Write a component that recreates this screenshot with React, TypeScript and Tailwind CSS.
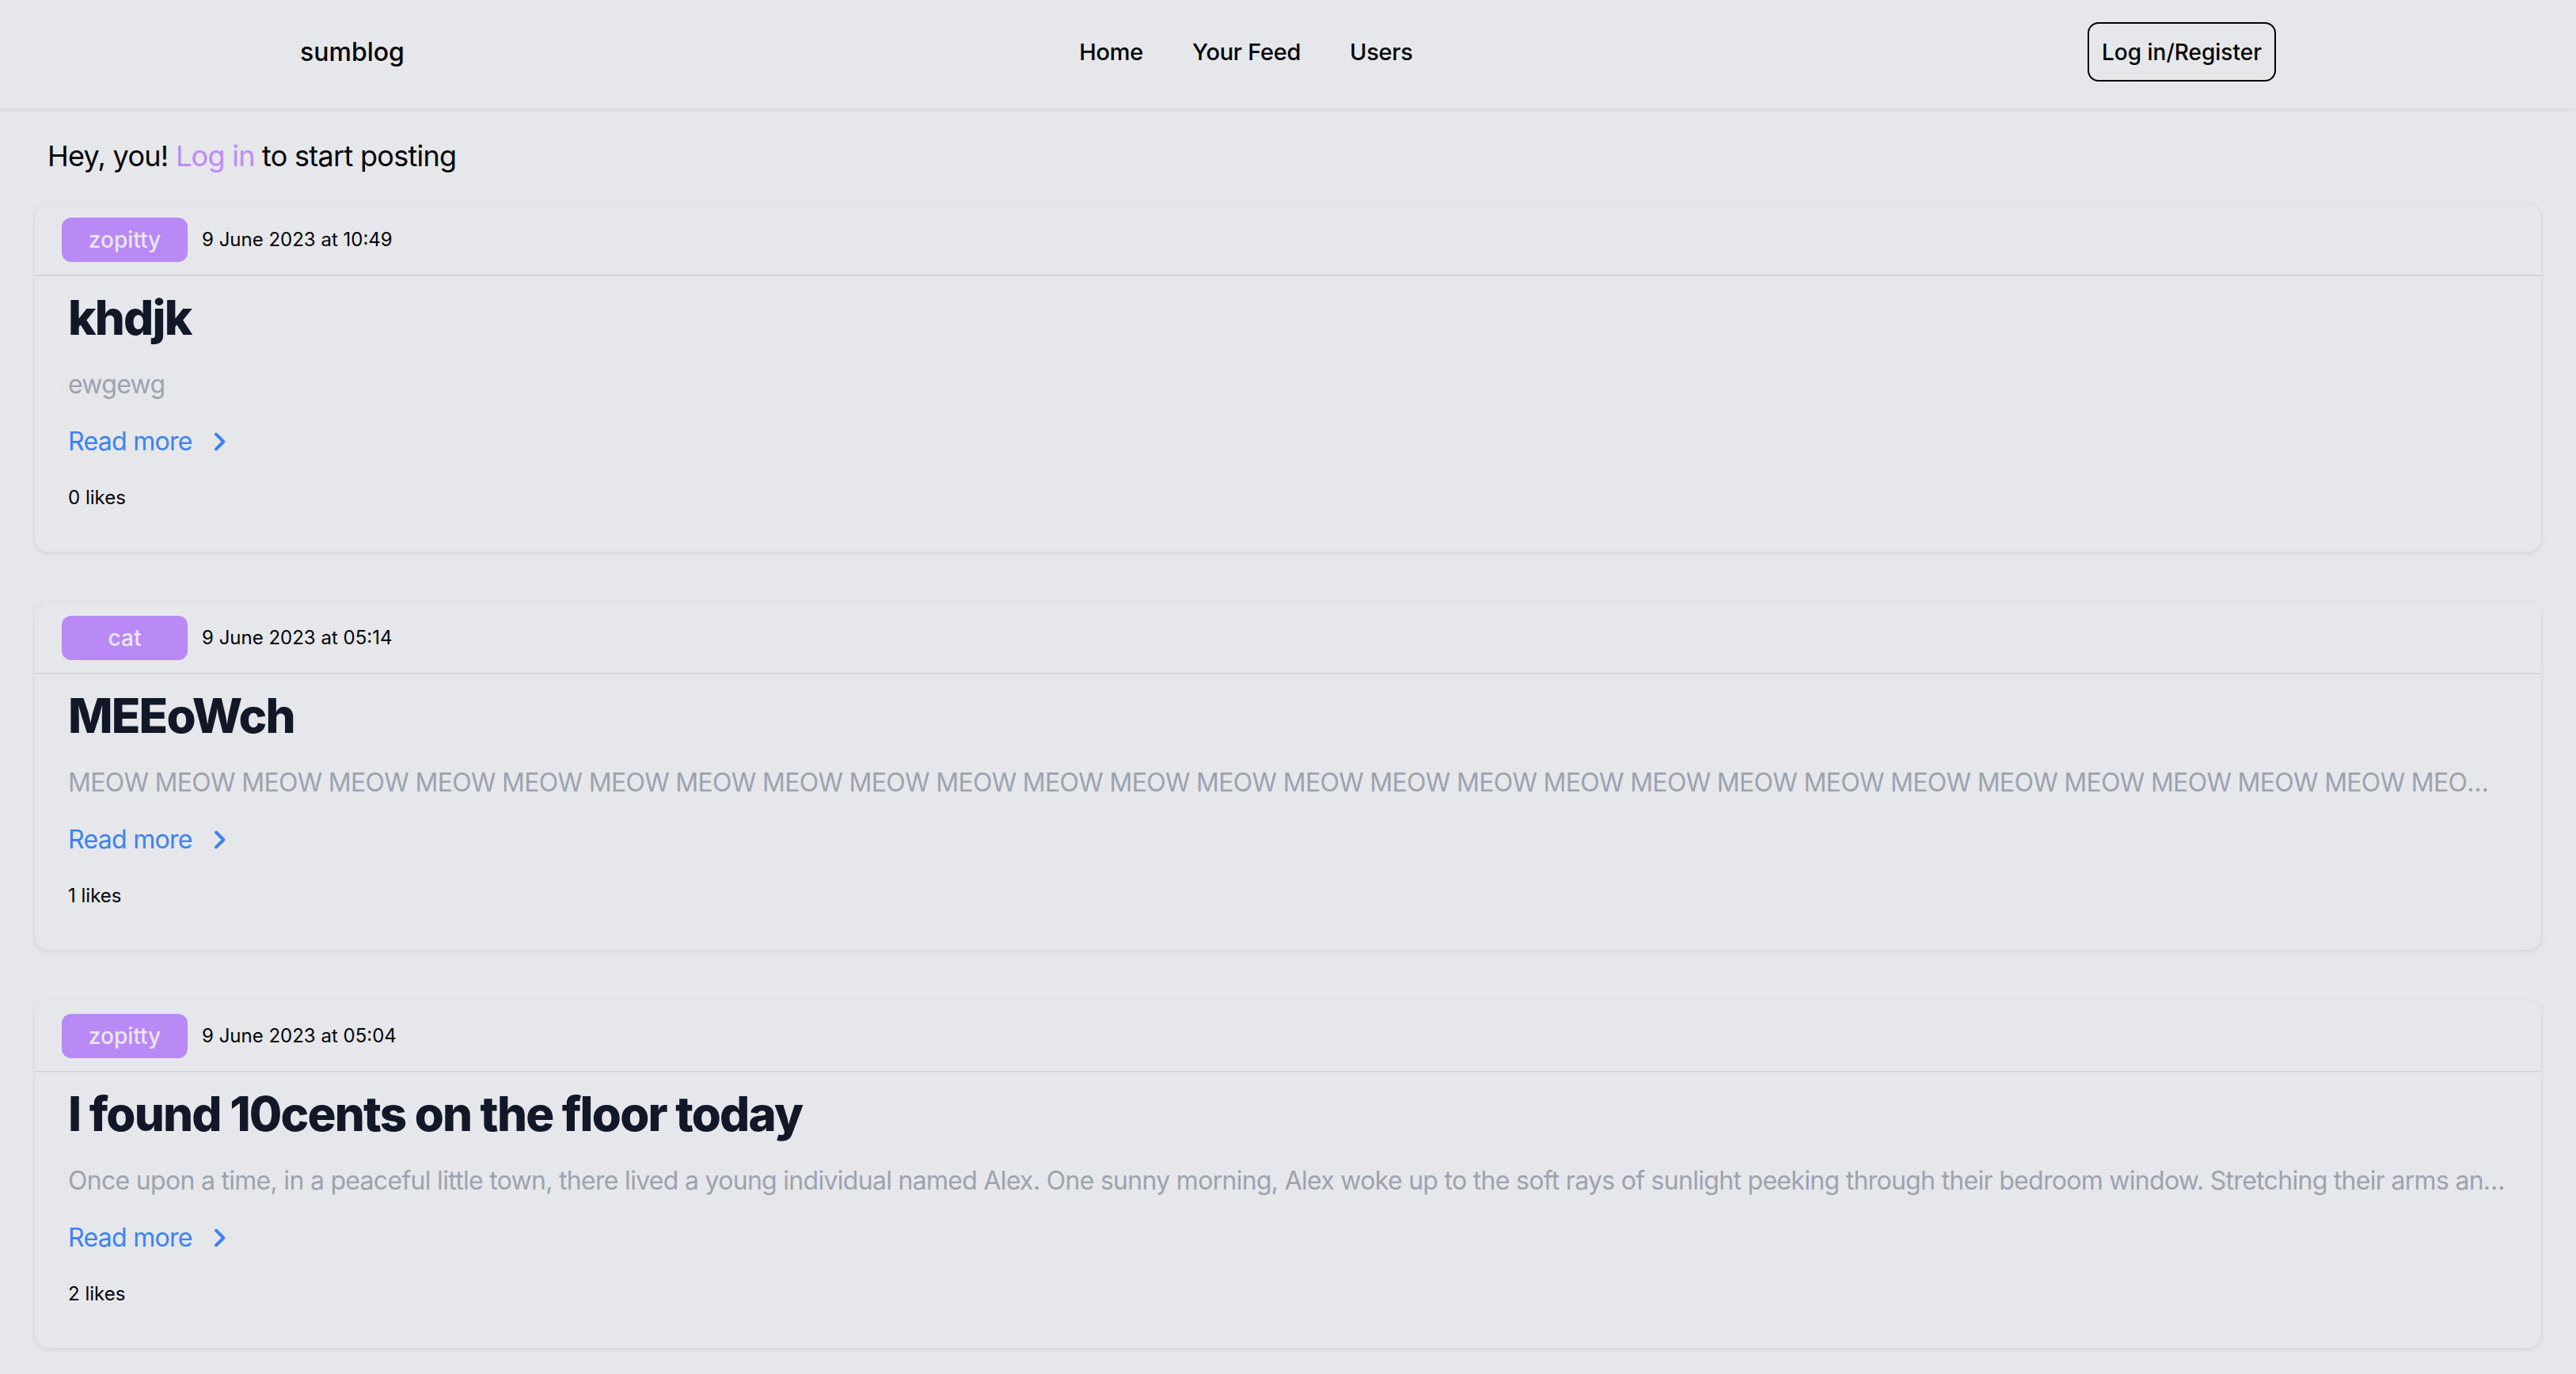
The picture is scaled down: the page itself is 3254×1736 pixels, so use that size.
import React from "react";

type Post = {
    author: string;
    date: string;
    title: string;
    body: string;
    likes: number;
};

const posts: Post[] = [
    {
        author: "zopitty",
        date: "9 June 2023 at 10:49",
        title: "khdjk",
        body: "ewgewg",
        likes: 0,
    },
    {
        author: "cat",
        date: "9 June 2023 at 05:14",
        title: "MEEoWch",
        body: Array(60).fill("MEOW").join(" "),
        likes: 1,
    },
    {
        author: "zopitty",
        date: "9 June 2023 at 05:04",
        title: "I found 10cents on the floor today",
        body: "Once upon a time, in a peaceful little town, there lived a young individual named Alex. One sunny morning, Alex woke up to the soft rays of sunlight peeking through their bedroom window. Stretching their arms and yawning, they got out of bed and headed downstairs.",
        likes: 2,
    },
];

const ChevronRight = () => (
    <svg
        viewBox="0 0 24 24"
        className="h-[32px] w-[32px]"
        fill="none"
        stroke="currentColor"
        strokeWidth={3}
        strokeLinecap="round"
        strokeLinejoin="round"
    >
        <path d="M9 5l7 7-7 7" />
    </svg>
);

const Header: React.FC = () => (
    <header className="border-b-2 border-[#dcdde1] pb-[6px] shadow-[0_1px_2px_rgba(0,0,0,0.04)]">
        <div className="mx-auto flex h-[131px] max-w-[2560px] items-center justify-between px-[32px]">
            <span className="text-[32px] font-medium text-black">sumblog</span>
            <nav className="flex items-center gap-[62px] text-[29px] font-medium tracking-[-0.01em] text-black">
                <a href="#">Home</a>
                <a href="#">Your Feed</a>
                <a href="#">Users</a>
            </nav>
            <button className="h-[75px] rounded-[14px] border-2 border-black px-[16px] text-[28px] font-medium text-black">
                Log in/Register
            </button>
        </div>
    </header>
);

const PostCard: React.FC<{ post: Post }> = ({ post }) => (
    <div className="mb-[64px] rounded-[16px] bg-[#e5e7eb] shadow-[0_2px_6px_rgba(0,0,0,0.08),0_0_2px_rgba(0,0,0,0.06)]">
        <div className="flex h-[91px] items-center border-b-2 border-[#d4d5da] px-[34px]">
            <span className="flex h-[56px] w-[159px] items-center justify-center rounded-[12px] bg-[#b98af5] text-[28px] font-medium text-[#ebe7f3]">
                {post.author}
            </span>
            <span className="ml-[18px] text-[24px] text-black">{post.date}</span>
        </div>
        <div className="px-[42px] pb-[52px] pt-[16px]">
            <h2 className="text-[60px] font-extrabold leading-[72px] tracking-[-0.03em] text-[#111827]">
                {post.title}
            </h2>
            <p className="mt-[25px] truncate text-[32px] leading-[48px] tracking-[-0.022em] text-[#9ca3af]">
                {post.body}
            </p>
            <a
                href="#"
                className="mt-[24px] flex h-[48px] w-fit items-center gap-[18px] text-[32px] tracking-[-0.022em] text-[#3b82f6]"
            >
                Read more
                <ChevronRight />
            </a>
            <p className="mt-[31px] text-[24px] leading-[32px] text-black">
                {post.likes} likes
            </p>
        </div>
    </div>
);

const App: React.FC = () => {
    return (
        <div className="min-h-screen bg-[#e5e7eb] font-['Inter',sans-serif]">
            <Header />
            <main className="px-[44px] pt-[30px]">
                <h1 className="mb-[33px] px-[16px] text-[36px] leading-[56px] tracking-[-0.02em] text-black">
                    Hey, you!{" "}
                    <a href="#" className="text-[#bd8af8]">
                        Log in
                    </a>{" "}
                    to start posting
                </h1>
                {posts.map((post, index) => (
                    <PostCard key={index} post={post} />
                ))}
            </main>
        </div>
    );
};

export default App;
